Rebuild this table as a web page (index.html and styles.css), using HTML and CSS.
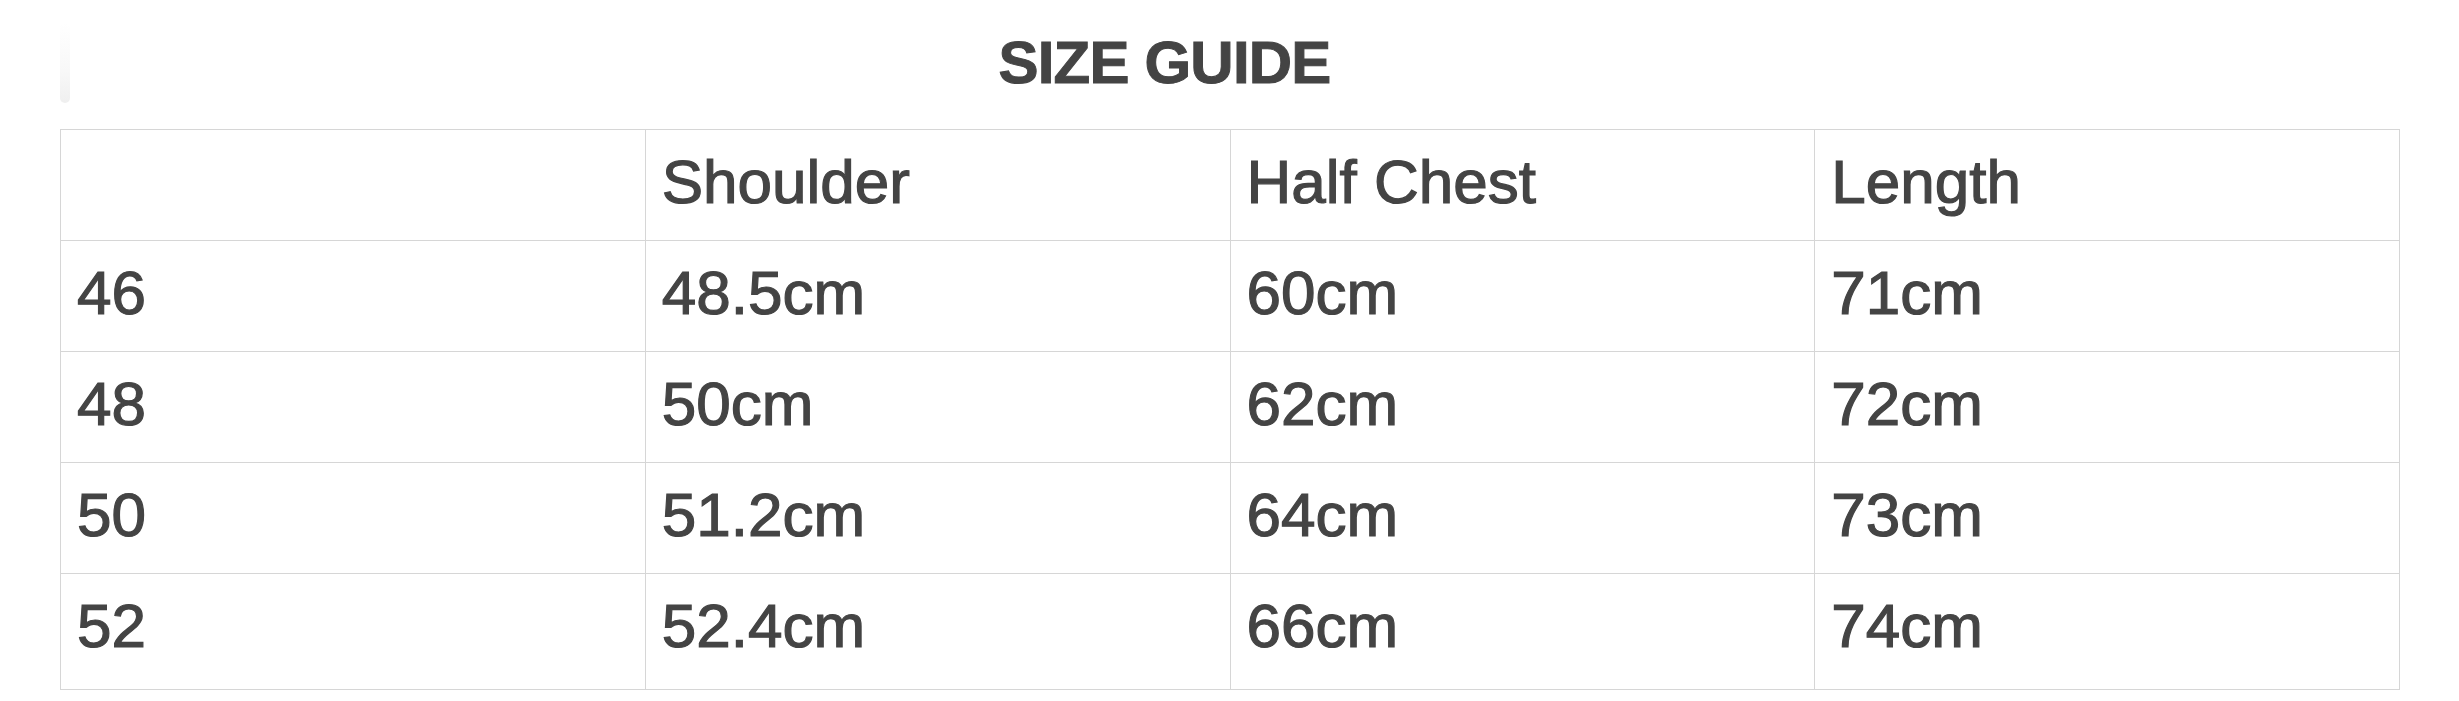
FILE: index.html
```html
<!DOCTYPE html>
<html lang="en">
<head>
<meta charset="utf-8">
<title>Size Guide</title>
<link rel="stylesheet" href="styles.css">
</head>
<body>
<div class="page">
  <header class="guide-header">
    <span class="ghost-bar"></span>
    <h1 class="guide-title">SIZE GUIDE</h1>
  </header>
  <table class="size-table">
    <thead>
      <tr><th></th><th>Shoulder</th><th>Half Chest</th><th>Length</th></tr>
    </thead>
    <tbody>
      <tr><td>46</td><td>48.5cm</td><td>60cm</td><td>71cm</td></tr>
      <tr><td>48</td><td>50cm</td><td>62cm</td><td>72cm</td></tr>
      <tr><td>50</td><td>51.2cm</td><td>64cm</td><td>73cm</td></tr>
      <tr class="last"><td>52</td><td>52.4cm</td><td>66cm</td><td>74cm</td></tr>
    </tbody>
  </table>
</div>
</body>
</html>
```

FILE: styles.css
```css
html, body {
  margin: 0;
  padding: 0;
  background: #ffffff;
}

body {
  font-family: "Liberation Sans", Arial, sans-serif;
  color: #444444;
}

.page {
  width: 2459px;
  padding: 0 60px;
  box-sizing: border-box;
}

.guide-header {
  display: flex;
  align-items: flex-start;
  height: 129px;
}

.ghost-bar {
  display: block;
  width: 10px;
  height: 80px;
  margin-top: 23px;
  border-radius: 5px;
  background: linear-gradient(to bottom, #ffffff 0%, #f8f8f8 60%, #efefef 100%);
}

.guide-title {
  flex: 1;
  margin: 28px 0 0 0;
  padding-right: 140px;
  text-align: center;
  font-size: 60px;
  font-weight: 700;
  line-height: normal;
  letter-spacing: -0.8px;
  color: #444444;
  -webkit-text-stroke: 1px #444444;
}

.size-table {
  width: 2340px;
  border-collapse: collapse;
  table-layout: fixed;
}

.size-table th,
.size-table td {
  border: 1px solid #d6d6d6;
  height: 111px;
  padding: 0 16px 7px 16px;
  box-sizing: border-box;
  text-align: left;
  vertical-align: middle;
  font-size: 62px;
  font-weight: 400;
  line-height: normal;
  color: #444444;
  white-space: nowrap;
  -webkit-text-stroke: 1.2px #444444;
}

.size-table tr.last td {
  height: 116px;
  padding-bottom: 12px;
}
```
